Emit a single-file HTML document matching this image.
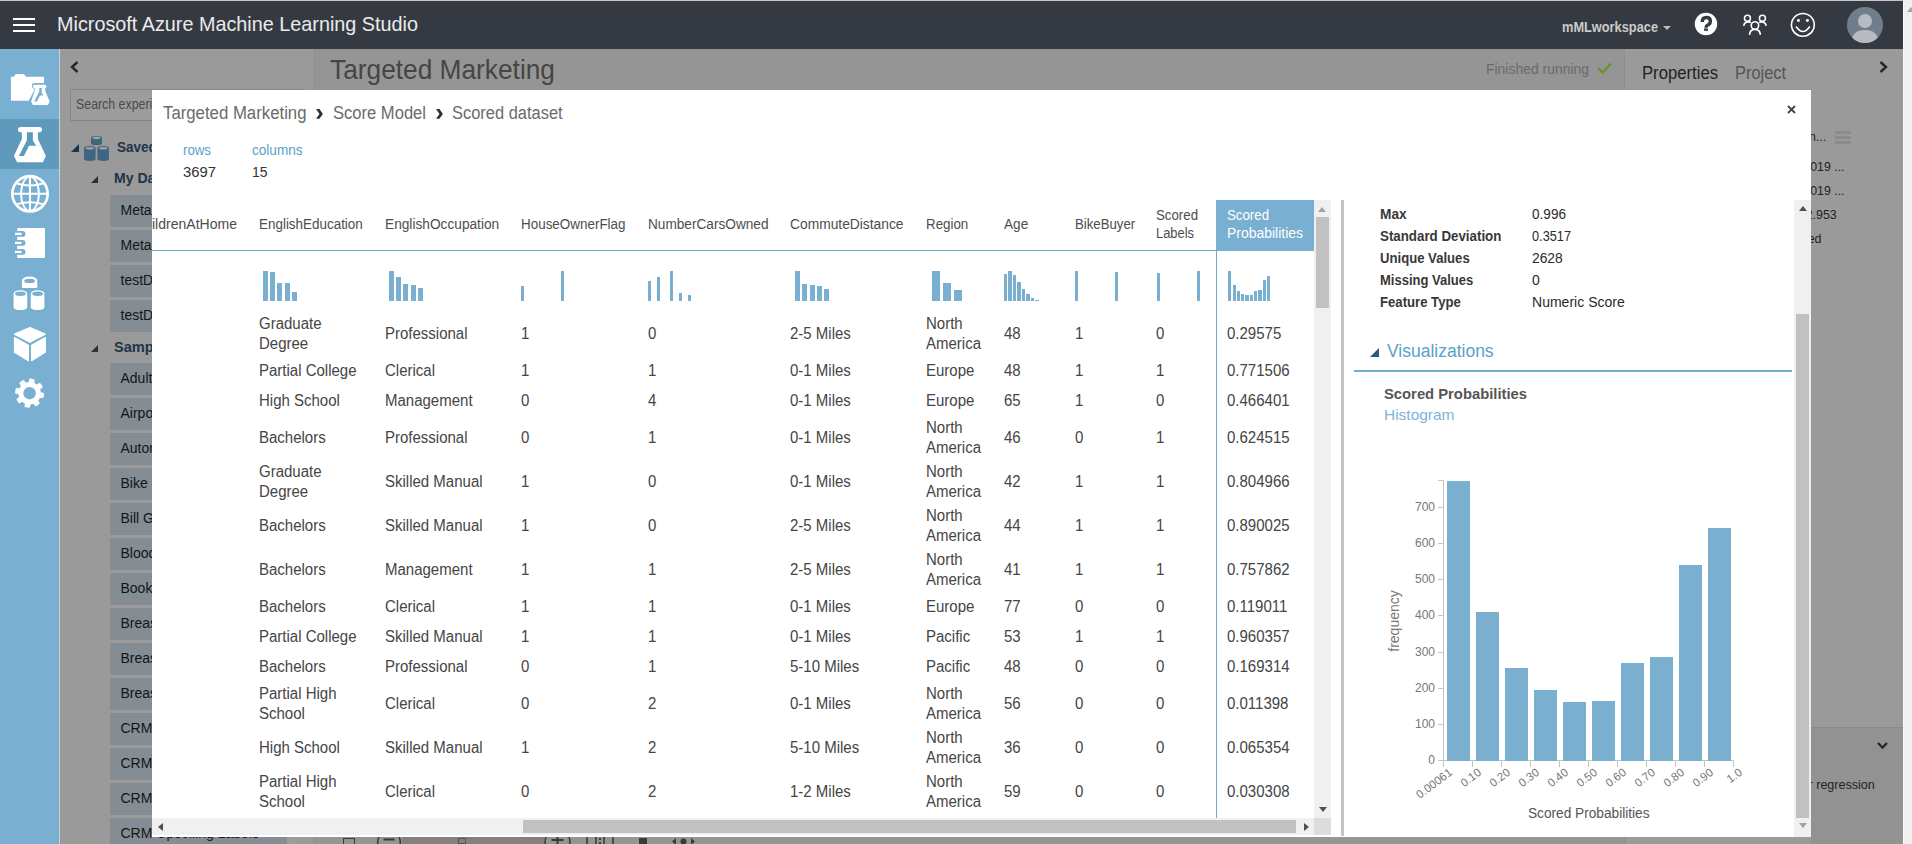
<!DOCTYPE html>
<html><head><meta charset="utf-8">
<style>
*{margin:0;padding:0;box-sizing:border-box}
html,body{width:1912px;height:844px;overflow:hidden;background:#989898;font-family:"Liberation Sans",sans-serif;position:relative}
.a{position:absolute}
.t{position:absolute;white-space:pre}
svg{position:absolute;overflow:visible}
</style></head><body>
<div class="a" style="left:0px;top:0px;width:1912px;height:1px;background:#c8c5c8;"></div>
<div class="a" style="left:0px;top:1px;width:1903px;height:48px;background:#353a42;"></div>
<div class="a" style="left:1903px;top:0px;width:9px;height:844px;background:#f0f0f0;"></div>
<div class="a" style="left:1903px;top:1px;width:1px;height:843px;background:#fafafa;"></div>
<svg style="left:1907px;top:7px" width="6" height="5"><path d="M0 5 H8 L4 0Z" fill="#a3a3a3"/></svg>
<div class="a" style="left:13px;top:18px;width:22px;height:2px;background:#fff;"></div>
<div class="a" style="left:13px;top:24px;width:22px;height:2px;background:#fff;"></div>
<div class="a" style="left:13px;top:30px;width:22px;height:2px;background:#fff;"></div>
<div class="t" style="left:57px;top:12.00px;font-size:21px;line-height:23.46px;color:#ebebeb;font-weight:400;transform:scaleX(0.9429);transform-origin:0 0;">Microsoft Azure Machine Learning Studio</div>
<div class="t" style="left:1562px;top:18.92px;font-size:15px;line-height:16.75px;color:#cacaca;font-weight:700;transform:scaleX(0.8530);transform-origin:0 0;">mMLworkspace</div>
<svg style="left:1663px;top:26px" width="8" height="4"><path d="M0 0H8L4 4Z" fill="#bdbdbd"/></svg>
<svg style="left:1690px;top:8px" width="130" height="34" viewBox="0 0 1912 500">
<circle cx="235" cy="235" r="165" fill="#fff"/>
<path d="M180 205 Q180 140 240 140 Q300 140 300 195 Q300 235 262 250 Q235 262 235 290" fill="none" stroke="#353a42" stroke-width="50"/>
<rect x="207" y="300" width="56" height="36" fill="#353a42"/>
<g fill="none" stroke="#fff" stroke-width="24">
<circle cx="845" cy="152" r="44" stroke-width="22"/><circle cx="1065" cy="152" r="44" stroke-width="22"/><circle cx="955" cy="258" r="55"/>
<path d="M790 262 Q800 205 860 205 Q880 205 895 215"/><path d="M1120 262 Q1110 205 1050 205 Q1030 205 1015 215"/>
<path d="M875 395 Q880 315 955 315 Q1030 315 1035 395"/>
<circle cx="1660" cy="248" r="168"/>
<path d="M1560 272 Q1660 420 1762 272"/>
</g>
<circle cx="1595" cy="185" r="22" fill="#fff"/><circle cx="1727" cy="185" r="22" fill="#fff"/>
</svg>
<svg style="left:1847px;top:7px" width="36" height="36"><defs><clipPath id="av"><circle cx="18" cy="18" r="18"/></clipPath></defs><circle cx="18" cy="18" r="18" fill="#6f7e8a"/><g clip-path="url(#av)" fill="#b8bbbf"><circle cx="18" cy="14" r="7"/><path d="M4 36 Q5 23 18 23 Q31 23 32 36Z"/></g></svg>
<div class="a" style="left:0px;top:49px;width:59px;height:795px;background:#79afd0;"></div>
<div class="a" style="left:59px;top:49px;width:1px;height:795px;background:#cfcfcf;"></div>
<div class="a" style="left:0px;top:119px;width:59px;height:50px;background:#5f9abd;"></div>
<svg style="left:5px;top:65px" width="50" height="50" viewBox="0 0 844 844"><path d="M100 200 H150 L180 152 H322 L355 200 H660 V305 H495 Q452 310 452 352 Q452 392 488 402 V440 L402 605 H100 Z" fill="#fff"/>
<path d="M497 335 H673 A27.5 27.5 0 0 1 673 390 H680 V445 L755 615 L725 675 H470 L440 615 L500 445 V390 H497 A27.5 27.5 0 0 1 497 335 Z" fill="#fff"/>
<path d="M580 390 H620 V475 L655 515 H590 L540 618 H495 L580 445 Z" fill="#79afd0"/></svg>
<svg style="left:5px;top:118px" width="50" height="50" viewBox="0 0 844 844"><path d="M265 150 H580 A45 45 0 0 1 580 240 H555 V355 L690 640 L640 745 H205 L150 640 L285 355 V240 H265 A45 45 0 0 1 265 150 Z" fill="#fff"/>
<path d="M370 240 H470 V375 L525 470 H405 L320 640 H235 L370 375 Z" fill="#5f9abd"/></svg>
<svg style="left:5px;top:168px" width="50" height="50" viewBox="0 0 844 844"><g fill="none" stroke="#fff"><circle cx="422" cy="435" r="298" stroke-width="45"/><ellipse cx="422" cy="435" rx="150" ry="290" stroke-width="32"/>
<path d="M422 140 V730 M130 435 H714" stroke-width="35"/><path d="M205 262 Q422 330 640 262 M205 610 Q422 545 640 610" stroke-width="32"/></g></svg>
<svg style="left:5px;top:218px" width="50" height="50" viewBox="0 0 844 844"><rect x="205" y="168" width="470" height="507" rx="18" fill="#fff"/>
<rect x="140" y="218" width="205" height="100" rx="50" fill="#79afd0"/><rect x="168" y="249" width="112" height="38" fill="#fff"/><rect x="140" y="370" width="205" height="100" rx="50" fill="#79afd0"/><rect x="168" y="401" width="112" height="38" fill="#fff"/><rect x="140" y="522" width="205" height="100" rx="50" fill="#79afd0"/><rect x="168" y="553" width="112" height="38" fill="#fff"/></svg>
<svg style="left:5px;top:268px" width="50" height="50" viewBox="0 0 844 844"><path d="M285 215 A130 70 0 0 1 545 215 V335 A130 1 0 0 1 285 335 Z" fill="#fff"/><ellipse cx="415" cy="220" rx="90" ry="38" fill="#79afd0"/>
<path d="M130 430 A130 70 0 0 1 390 430 V670 A130 55 0 0 1 130 670 Z" fill="#fff" stroke="#79afd0" stroke-width="30"/><ellipse cx="260" cy="435" rx="90" ry="38" fill="#79afd0"/>
<path d="M420 430 A130 70 0 0 1 680 430 V670 A130 55 0 0 1 420 670 Z" fill="#fff" stroke="#79afd0" stroke-width="30"/><ellipse cx="550" cy="435" rx="90" ry="38" fill="#79afd0"/>
<path d="M130 430 A130 70 0 0 1 390 430 V670 A130 55 0 0 1 130 670 Z" fill="none"/></svg>
<svg style="left:5px;top:318px" width="50" height="50" viewBox="0 0 844 844"><g fill="#fff" stroke="#fff" stroke-width="20" stroke-linejoin="round"><path d="M420 160 L680 272 L420 410 L160 272 Z"/><path d="M160 330 L395 462 V720 L160 578 Z"/><path d="M680 330 L448 462 V720 L680 578 Z"/></g></svg>
<svg style="left:5px;top:368px" width="50" height="50" viewBox="0 0 844 844"><g transform="translate(415 425)" fill="#fff"><circle r="190"/><rect x="-48" y="-245" width="96" height="110" rx="22" transform="rotate(10)"/><rect x="-48" y="-245" width="96" height="110" rx="22" transform="rotate(55)"/><rect x="-48" y="-245" width="96" height="110" rx="22" transform="rotate(100)"/><rect x="-48" y="-245" width="96" height="110" rx="22" transform="rotate(145)"/><rect x="-48" y="-245" width="96" height="110" rx="22" transform="rotate(190)"/><rect x="-48" y="-245" width="96" height="110" rx="22" transform="rotate(235)"/><rect x="-48" y="-245" width="96" height="110" rx="22" transform="rotate(280)"/><rect x="-48" y="-245" width="96" height="110" rx="22" transform="rotate(325)"/><circle r="105" fill="#79afd0"/></g></svg>
<div class="a" style="left:60px;top:49px;width:254px;height:795px;background:#9a9a9a;"></div>
<svg style="left:70px;top:61px" width="9" height="12" fill="none" stroke="#1e2a33" stroke-width="2.4"><path d="M7.5 1 L2 6 L7.5 11"/></svg>
<div class="a" style="left:70px;top:89px;width:234px;height:32px;background:#9c9c9c;border:1px solid #858585"></div>
<div class="t" style="left:76px;top:97.33px;font-size:14px;line-height:15.64px;color:#4a4a4a;font-weight:400;transform:scaleX(0.8834);transform-origin:0 0;">Search experiments</div>
<svg style="left:71px;top:144px" width="8" height="8"><path d="M8 0V8H0Z" fill="#1c3447"/></svg>
<svg style="left:84px;top:136px" width="25" height="25" fill="#3f6680"><path d="M7 1.5 Q7 0 12.5 0 Q18 0 18 1.5 V7.5 Q18 9 12.5 9 Q7 9 7 7.5Z"/>
<path d="M0 12 Q0 10 5.8 10 Q11.6 10 11.6 12 V22.5 Q11.6 25 5.8 25 Q0 25 0 22.5Z"/><path d="M13.4 12 Q13.4 10 19.2 10 Q25 10 25 12 V22.5 Q25 25 19.2 25 Q13.4 25 13.4 22.5Z"/>
<ellipse cx="12.5" cy="2" rx="4" ry="1.2" fill="#9f9f9f"/><ellipse cx="5.8" cy="12.3" rx="4.3" ry="1.3" fill="#9f9f9f"/><ellipse cx="19.2" cy="12.3" rx="4.3" ry="1.3" fill="#9f9f9f"/></svg>
<div class="t" style="left:117px;top:139.43px;font-size:15px;line-height:16.75px;color:#1e3548;font-weight:700;transform:scaleX(0.9017);transform-origin:0 0;">Saved Datasets</div>
<svg style="left:91px;top:176px" width="7" height="7"><path d="M7 0V7H0Z" fill="#1c3447"/></svg>
<div class="t" style="left:113.5px;top:170.43px;font-size:15px;line-height:16.75px;color:#1e3548;font-weight:700;transform:scaleX(0.9366);transform-origin:0 0;">My Datasets</div>
<div class="a" style="left:110px;top:195px;width:177px;height:32px;background:#838d93;"></div>
<div class="t" style="left:120.5px;top:203.33px;font-size:14px;line-height:15.64px;color:#151515;font-weight:400;">MetaData</div>
<div class="a" style="left:110px;top:230px;width:177px;height:32px;background:#838d93;"></div>
<div class="t" style="left:120.5px;top:238.33px;font-size:14px;line-height:15.64px;color:#151515;font-weight:400;">MetaData</div>
<div class="a" style="left:110px;top:265px;width:177px;height:32px;background:#838d93;"></div>
<div class="t" style="left:120.5px;top:273.33px;font-size:14px;line-height:15.64px;color:#151515;font-weight:400;">testData</div>
<div class="a" style="left:110px;top:300px;width:177px;height:32px;background:#838d93;"></div>
<div class="t" style="left:120.5px;top:308.33px;font-size:14px;line-height:15.64px;color:#151515;font-weight:400;">testData</div>
<svg style="left:91px;top:345px" width="7" height="7"><path d="M7 0V7H0Z" fill="#1c3447"/></svg>
<div class="t" style="left:113.5px;top:339.43px;font-size:15px;line-height:16.75px;color:#1e3548;font-weight:700;transform:scaleX(0.9724);transform-origin:0 0;">Samples</div>
<div class="a" style="left:110px;top:363px;width:177px;height:32px;background:#838d93;"></div>
<div class="t" style="left:120.5px;top:371.33px;font-size:14px;line-height:15.64px;color:#151515;font-weight:400;">Adult Census</div>
<div class="a" style="left:110px;top:398px;width:177px;height:32px;background:#838d93;"></div>
<div class="t" style="left:120.5px;top:406.33px;font-size:14px;line-height:15.64px;color:#151515;font-weight:400;">Airport Codes</div>
<div class="a" style="left:110px;top:433px;width:177px;height:32px;background:#838d93;"></div>
<div class="t" style="left:120.5px;top:441.33px;font-size:14px;line-height:15.64px;color:#151515;font-weight:400;">Automobile</div>
<div class="a" style="left:110px;top:468px;width:177px;height:32px;background:#838d93;"></div>
<div class="t" style="left:120.5px;top:476.33px;font-size:14px;line-height:15.64px;color:#151515;font-weight:400;">Bike Rental</div>
<div class="a" style="left:110px;top:503px;width:177px;height:32px;background:#838d93;"></div>
<div class="t" style="left:120.5px;top:511.33px;font-size:14px;line-height:15.64px;color:#151515;font-weight:400;">Bill Gates</div>
<div class="a" style="left:110px;top:538px;width:177px;height:32px;background:#838d93;"></div>
<div class="t" style="left:120.5px;top:546.33px;font-size:14px;line-height:15.64px;color:#151515;font-weight:400;">Blood Donation</div>
<div class="a" style="left:110px;top:573px;width:177px;height:32px;background:#838d93;"></div>
<div class="t" style="left:120.5px;top:581.33px;font-size:14px;line-height:15.64px;color:#151515;font-weight:400;">Book Reviews</div>
<div class="a" style="left:110px;top:608px;width:177px;height:32px;background:#838d93;"></div>
<div class="t" style="left:120.5px;top:616.33px;font-size:14px;line-height:15.64px;color:#151515;font-weight:400;">Breast Cancer</div>
<div class="a" style="left:110px;top:643px;width:177px;height:32px;background:#838d93;"></div>
<div class="t" style="left:120.5px;top:651.33px;font-size:14px;line-height:15.64px;color:#151515;font-weight:400;">Breast Cancer</div>
<div class="a" style="left:110px;top:678px;width:177px;height:32px;background:#838d93;"></div>
<div class="t" style="left:120.5px;top:686.33px;font-size:14px;line-height:15.64px;color:#151515;font-weight:400;">Breast Cancer</div>
<div class="a" style="left:110px;top:713px;width:177px;height:32px;background:#838d93;"></div>
<div class="t" style="left:120.5px;top:721.33px;font-size:14px;line-height:15.64px;color:#151515;font-weight:400;">CRM Appetency</div>
<div class="a" style="left:110px;top:748px;width:177px;height:32px;background:#838d93;"></div>
<div class="t" style="left:120.5px;top:756.33px;font-size:14px;line-height:15.64px;color:#151515;font-weight:400;">CRM Churn</div>
<div class="a" style="left:110px;top:783px;width:177px;height:32px;background:#838d93;"></div>
<div class="t" style="left:120.5px;top:791.33px;font-size:14px;line-height:15.64px;color:#151515;font-weight:400;">CRM Dataset</div>
<div class="a" style="left:110px;top:818px;width:177px;height:32px;background:#838d93;"></div>
<div class="t" style="left:120.5px;top:826.33px;font-size:14px;line-height:15.64px;color:#151515;font-weight:400;">CRM Upselling Labels</div>
<div class="a" style="left:314px;top:49px;width:1311px;height:795px;background:#959595;"></div>
<div class="a" style="left:314px;top:49px;width:1px;height:795px;background:#8f8f8f;"></div>
<div class="t" style="left:329.5px;top:53.66px;font-size:28px;line-height:31.28px;color:#454545;font-weight:400;transform:scaleX(0.9387);transform-origin:0 0;">Targeted Marketing</div>
<div class="t" style="left:1486px;top:62.33px;font-size:14px;line-height:15.64px;color:#6a6a6a;font-weight:400;transform:scaleX(0.9950);transform-origin:0 0;">Finished running</div>
<svg style="left:1597px;top:62px" width="15" height="12" fill="none" stroke="#6a9330" stroke-width="2.4"><path d="M1 6 L5.5 10.5 L14 1.5"/></svg>
<div class="a" style="left:287px;top:837px;width:10px;height:7px;background:#9c9c9c;"></div>
<div class="a" style="left:343px;top:838px;width:12px;height:8px;background:transparent;border:1.5px solid #3a3a3a"></div>
<svg style="left:376px;top:837px" width="26" height="8" fill="none" stroke="#3a3a3a" stroke-width="1.6"><path d="M3 0 Q1 4 2 8 M23 0 Q25 4 24 8"/><path d="M7.5 2.5 H18.5" stroke-width="2"/></svg>
<div class="a" style="left:402px;top:837px;width:142px;height:7px;background:#85807e;"></div>
<div class="a" style="left:458px;top:838px;width:8px;height:6px;background:transparent;border:1px solid #555"></div>
<svg style="left:544px;top:837px" width="27" height="8" fill="none" stroke="#3a3a3a" stroke-width="1.6"><path d="M2 0 Q0.5 4 1.5 8 M25 0 Q26.5 4 25.5 8"/><path d="M7.5 3 H19.5 M13.5 0 V8" stroke-width="2"/></svg>
<svg style="left:586px;top:837px" width="28" height="8" fill="none" stroke="#3a3a3a" stroke-width="1.6"><path d="M1 0 V8 M27 0 V8 M10 0 V8 M18 0 V8"/><path d="M14 1 V3 M14 5 V7" stroke-width="2"/></svg>
<div class="a" style="left:639px;top:838px;width:8px;height:6px;background:#3a3a3a;"></div>
<svg style="left:672px;top:837px" width="23" height="8" fill="#3a3a3a"><path d="M4 1 L0 4.5 L4 8Z M19 1 L23 4.5 L19 8Z"/><circle cx="11.5" cy="4.5" r="3"/></svg>
<div class="a" style="left:1625px;top:49px;width:278px;height:795px;background:#9a9a9a;"></div>
<div class="a" style="left:1624px;top:49px;width:1px;height:795px;background:#8f8f8f;"></div>
<div class="t" style="left:1642px;top:62.71px;font-size:18px;line-height:20.11px;color:#222;font-weight:400;transform:scaleX(0.9263);transform-origin:0 0;">Properties</div>
<div class="t" style="left:1735px;top:62.71px;font-size:18px;line-height:20.11px;color:#555;font-weight:400;transform:scaleX(0.9102);transform-origin:0 0;">Project</div>
<svg style="left:1879px;top:61px" width="9" height="12" fill="none" stroke="#1e2a33" stroke-width="2.4"><path d="M1.5 1 L7 6 L1.5 11"/></svg>
<div class="t" style="left:1762.85px;top:129.74px;font-size:13px;line-height:14.52px;color:#222;font-weight:400;transform:scaleX(0.9500);transform-origin:0 0;">Custom n...</div>
<div class="a" style="left:1835px;top:131px;width:16px;height:3px;background:#8c8c8c;"></div>
<div class="a" style="left:1835px;top:136px;width:16px;height:3px;background:#8c8c8c;"></div>
<div class="a" style="left:1835px;top:141px;width:16px;height:3px;background:#8c8c8c;"></div>
<div class="t" style="left:1769.46px;top:160.24px;font-size:13px;line-height:14.52px;color:#222;font-weight:400;transform:scaleX(0.9500);transform-origin:0 0;">10/28/2019 ...</div>
<div class="t" style="left:1769.46px;top:184.24px;font-size:13px;line-height:14.52px;color:#222;font-weight:400;transform:scaleX(0.9500);transform-origin:0 0;">10/28/2019 ...</div>
<div class="t" style="left:1792.35px;top:208.24px;font-size:13px;line-height:14.52px;color:#222;font-weight:400;transform:scaleX(0.9500);transform-origin:0 0;">122.953</div>
<div class="t" style="left:1779.57px;top:232.24px;font-size:13px;line-height:14.52px;color:#222;font-weight:400;transform:scaleX(0.9500);transform-origin:0 0;">Trained</div>
<div class="a" style="left:1811px;top:727px;width:92px;height:117px;background:#929292;"></div>
<div class="a" style="left:1811px;top:727px;width:92px;height:1px;background:#8a8a8a;"></div>
<svg style="left:1877px;top:742px" width="11" height="7" fill="none" stroke="#1e2a33" stroke-width="2.4"><path d="M1 1 L5.5 5.5 L10 1"/></svg>
<div class="t" style="left:1782.16px;top:778.24px;font-size:13px;line-height:14.52px;color:#222;font-weight:400;transform:scaleX(0.9660);transform-origin:0 0;">linear regression</div>
<div class="a" style="left:152px;top:90px;width:1659px;height:747px;background:#fff;"></div>
<div class="t" style="left:163px;top:103.21px;font-size:18px;line-height:20.11px;color:#6b6b6b;font-weight:400;transform:scaleX(0.9313);transform-origin:0 0;">Targeted Marketing</div>
<svg style="left:316px;top:109px" width="8" height="10"><path d="M0 0.1 H3.4 L6.9 5 L3.4 9.8 H0 L3.5 5Z" fill="#2a3038"/></svg>
<div class="t" style="left:333px;top:103.21px;font-size:18px;line-height:20.11px;color:#6b6b6b;font-weight:400;transform:scaleX(0.9202);transform-origin:0 0;">Score Model</div>
<svg style="left:436px;top:109px" width="8" height="10"><path d="M0 0.1 H3.4 L6.9 5 L3.4 9.8 H0 L3.5 5Z" fill="#2a3038"/></svg>
<div class="t" style="left:452.4px;top:103.21px;font-size:18px;line-height:20.11px;color:#6b6b6b;font-weight:400;transform:scaleX(0.9135);transform-origin:0 0;">Scored dataset</div>
<svg style="left:1787px;top:105px" width="9" height="9" fill="none" stroke="#444" stroke-width="1.8"><path d="M1 1L8 8M8 1L1 8"/></svg>
<div class="t" style="left:183px;top:143.33px;font-size:14px;line-height:15.64px;color:#5a9fc9;font-weight:400;transform:scaleX(0.9471);transform-origin:0 0;">rows</div>
<div class="t" style="left:252.4px;top:143.33px;font-size:14px;line-height:15.64px;color:#5a9fc9;font-weight:400;transform:scaleX(0.9705);transform-origin:0 0;">columns</div>
<div class="t" style="left:183px;top:162.97px;font-size:15.5px;line-height:17.31px;color:#333;font-weight:400;transform:scaleX(0.9570);transform-origin:0 0;">3697</div>
<div class="t" style="left:252.4px;top:162.97px;font-size:15.5px;line-height:17.31px;color:#333;font-weight:400;transform:scaleX(0.9043);transform-origin:0 0;">15</div>
<div class="a" style="left:152px;top:250px;width:1064px;height:1px;background:#6faad0;"></div>
<div class="a" style="left:1216px;top:200px;width:98px;height:51px;background:#79afd0;"></div>
<div class="a" style="left:1216px;top:250px;width:1px;height:568px;background:#6faad0;"></div>
<div class="t" style="left:152px;top:217.33px;font-size:14px;line-height:15.64px;color:#4d4d4d;font-weight:400;transform:scaleX(1.0020);transform-origin:0 0;">ildrenAtHome</div>
<div class="t" style="left:258.9px;top:217.33px;font-size:14px;line-height:15.64px;color:#4d4d4d;font-weight:400;transform:scaleX(0.9594);transform-origin:0 0;">EnglishEducation</div>
<div class="t" style="left:384.7px;top:217.33px;font-size:14px;line-height:15.64px;color:#4d4d4d;font-weight:400;transform:scaleX(0.9782);transform-origin:0 0;">EnglishOccupation</div>
<div class="t" style="left:520.9px;top:217.33px;font-size:14px;line-height:15.64px;color:#4d4d4d;font-weight:400;transform:scaleX(0.9593);transform-origin:0 0;">HouseOwnerFlag</div>
<div class="t" style="left:648px;top:217.33px;font-size:14px;line-height:15.64px;color:#4d4d4d;font-weight:400;transform:scaleX(0.9740);transform-origin:0 0;">NumberCarsOwned</div>
<div class="t" style="left:790.2px;top:217.33px;font-size:14px;line-height:15.64px;color:#4d4d4d;font-weight:400;transform:scaleX(0.9856);transform-origin:0 0;">CommuteDistance</div>
<div class="t" style="left:925.7px;top:217.33px;font-size:14px;line-height:15.64px;color:#4d4d4d;font-weight:400;transform:scaleX(0.9532);transform-origin:0 0;">Region</div>
<div class="t" style="left:1003.5px;top:217.33px;font-size:14px;line-height:15.64px;color:#4d4d4d;font-weight:400;transform:scaleX(0.9710);transform-origin:0 0;">Age</div>
<div class="t" style="left:1074.8px;top:217.33px;font-size:14px;line-height:15.64px;color:#4d4d4d;font-weight:400;transform:scaleX(0.9434);transform-origin:0 0;">BikeBuyer</div>
<div class="t" style="left:1156.3px;top:208.33px;font-size:14px;line-height:15.64px;color:#4d4d4d;font-weight:400;transform:scaleX(0.9468);transform-origin:0 0;">Scored</div>
<div class="t" style="left:1156.3px;top:226.33px;font-size:14px;line-height:15.64px;color:#4d4d4d;font-weight:400;transform:scaleX(0.9209);transform-origin:0 0;">Labels</div>
<div class="t" style="left:1227px;top:208.33px;font-size:14px;line-height:15.64px;color:#fff;font-weight:400;transform:scaleX(0.9468);transform-origin:0 0;">Scored</div>
<div class="t" style="left:1227px;top:226.33px;font-size:14px;line-height:15.64px;color:#fff;font-weight:400;transform:scaleX(0.9965);transform-origin:0 0;">Probabilities</div>
<div class="a" style="left:263px;top:271px;width:5px;height:30px;background:#79afd0;"></div>
<div class="a" style="left:270px;top:272px;width:5px;height:29px;background:#79afd0;"></div>
<div class="a" style="left:277px;top:283px;width:5px;height:18px;background:#79afd0;"></div>
<div class="a" style="left:285px;top:283px;width:5px;height:18px;background:#79afd0;"></div>
<div class="a" style="left:292px;top:292px;width:5px;height:9px;background:#79afd0;"></div>
<div class="a" style="left:389px;top:271px;width:5px;height:30px;background:#79afd0;"></div>
<div class="a" style="left:396px;top:276.6px;width:5px;height:24.399999999999977px;background:#79afd0;"></div>
<div class="a" style="left:403px;top:284px;width:5px;height:17px;background:#79afd0;"></div>
<div class="a" style="left:411px;top:285px;width:5px;height:16px;background:#79afd0;"></div>
<div class="a" style="left:418px;top:288px;width:5px;height:13px;background:#79afd0;"></div>
<div class="a" style="left:521px;top:286.4px;width:3px;height:14.600000000000023px;background:#79afd0;"></div>
<div class="a" style="left:561px;top:271px;width:3px;height:30px;background:#79afd0;"></div>
<div class="a" style="left:648px;top:281px;width:3px;height:20px;background:#79afd0;"></div>
<div class="a" style="left:657px;top:277px;width:3px;height:24px;background:#79afd0;"></div>
<div class="a" style="left:670px;top:271px;width:3px;height:30px;background:#79afd0;"></div>
<div class="a" style="left:679px;top:293px;width:3px;height:8px;background:#79afd0;"></div>
<div class="a" style="left:688px;top:295.3px;width:3px;height:5.699999999999989px;background:#79afd0;"></div>
<div class="a" style="left:795px;top:271px;width:5px;height:30px;background:#79afd0;"></div>
<div class="a" style="left:802px;top:284px;width:5px;height:17px;background:#79afd0;"></div>
<div class="a" style="left:809.5px;top:285px;width:5px;height:16px;background:#79afd0;"></div>
<div class="a" style="left:817px;top:286px;width:5px;height:15px;background:#79afd0;"></div>
<div class="a" style="left:824px;top:289.3px;width:5px;height:11.699999999999989px;background:#79afd0;"></div>
<div class="a" style="left:932px;top:271px;width:8px;height:30px;background:#79afd0;"></div>
<div class="a" style="left:943px;top:283px;width:8px;height:18px;background:#79afd0;"></div>
<div class="a" style="left:954px;top:290px;width:8px;height:11px;background:#79afd0;"></div>
<div class="a" style="left:1004.0px;top:274px;width:3.4px;height:27px;background:#79afd0;"></div>
<div class="a" style="left:1008.45px;top:271px;width:3.4px;height:30px;background:#79afd0;"></div>
<div class="a" style="left:1012.9px;top:275.4px;width:3.4px;height:25.600000000000023px;background:#79afd0;"></div>
<div class="a" style="left:1017.35px;top:282.2px;width:3.4px;height:18.80000000000001px;background:#79afd0;"></div>
<div class="a" style="left:1021.8px;top:288.8px;width:3.4px;height:12.199999999999989px;background:#79afd0;"></div>
<div class="a" style="left:1026.25px;top:294px;width:3.4px;height:7px;background:#79afd0;"></div>
<div class="a" style="left:1030.7px;top:298px;width:3.4px;height:3px;background:#79afd0;"></div>
<div class="a" style="left:1035.15px;top:300px;width:3.4px;height:1px;background:#79afd0;"></div>
<div class="a" style="left:1075px;top:271px;width:3px;height:30px;background:#79afd0;"></div>
<div class="a" style="left:1115px;top:272px;width:3px;height:29px;background:#79afd0;"></div>
<div class="a" style="left:1157px;top:272.6px;width:3px;height:28.399999999999977px;background:#79afd0;"></div>
<div class="a" style="left:1197px;top:271px;width:3px;height:30px;background:#79afd0;"></div>
<div class="a" style="left:1228.2px;top:271px;width:3.3px;height:30px;background:#79afd0;"></div>
<div class="a" style="left:1232.5px;top:285px;width:3.3px;height:16px;background:#79afd0;"></div>
<div class="a" style="left:1236.8px;top:291px;width:3.3px;height:10px;background:#79afd0;"></div>
<div class="a" style="left:1241.1000000000001px;top:293.5px;width:3.3px;height:7.5px;background:#79afd0;"></div>
<div class="a" style="left:1245.4px;top:294.7px;width:3.3px;height:6.300000000000011px;background:#79afd0;"></div>
<div class="a" style="left:1249.7px;top:294.6px;width:3.3px;height:6.399999999999977px;background:#79afd0;"></div>
<div class="a" style="left:1254.0px;top:290.5px;width:3.3px;height:10.5px;background:#79afd0;"></div>
<div class="a" style="left:1258.3px;top:289.9px;width:3.3px;height:11.100000000000023px;background:#79afd0;"></div>
<div class="a" style="left:1262.6000000000001px;top:280px;width:3.3px;height:21px;background:#79afd0;"></div>
<div class="a" style="left:1266.9px;top:276px;width:3.3px;height:25px;background:#79afd0;"></div>
<div class="t" style="left:258.9px;top:314.52px;font-size:16px;line-height:17.87px;color:#454545;font-weight:400;transform:scaleX(0.9375);transform-origin:0 0;">Graduate</div>
<div class="t" style="left:258.9px;top:334.52px;font-size:16px;line-height:17.87px;color:#454545;font-weight:400;transform:scaleX(0.9375);transform-origin:0 0;">Degree</div>
<div class="t" style="left:384.7px;top:324.52px;font-size:16px;line-height:17.87px;color:#454545;font-weight:400;transform:scaleX(0.9375);transform-origin:0 0;">Professional</div>
<div class="t" style="left:520.9px;top:324.52px;font-size:16px;line-height:17.87px;color:#454545;font-weight:400;transform:scaleX(0.9375);transform-origin:0 0;">1</div>
<div class="t" style="left:648px;top:324.52px;font-size:16px;line-height:17.87px;color:#454545;font-weight:400;transform:scaleX(0.9375);transform-origin:0 0;">0</div>
<div class="t" style="left:790.2px;top:324.52px;font-size:16px;line-height:17.87px;color:#454545;font-weight:400;transform:scaleX(0.9375);transform-origin:0 0;">2-5 Miles</div>
<div class="t" style="left:925.7px;top:314.52px;font-size:16px;line-height:17.87px;color:#454545;font-weight:400;transform:scaleX(0.9375);transform-origin:0 0;">North</div>
<div class="t" style="left:925.7px;top:334.52px;font-size:16px;line-height:17.87px;color:#454545;font-weight:400;transform:scaleX(0.9375);transform-origin:0 0;">America</div>
<div class="t" style="left:1003.5px;top:324.52px;font-size:16px;line-height:17.87px;color:#454545;font-weight:400;transform:scaleX(0.9375);transform-origin:0 0;">48</div>
<div class="t" style="left:1074.8px;top:324.52px;font-size:16px;line-height:17.87px;color:#454545;font-weight:400;transform:scaleX(0.9375);transform-origin:0 0;">1</div>
<div class="t" style="left:1156.3px;top:324.52px;font-size:16px;line-height:17.87px;color:#454545;font-weight:400;transform:scaleX(0.9375);transform-origin:0 0;">0</div>
<div class="t" style="left:1227px;top:324.52px;font-size:16px;line-height:17.87px;color:#454545;font-weight:400;transform:scaleX(0.9375);transform-origin:0 0;">0.29575</div>
<div class="t" style="left:258.9px;top:361.52px;font-size:16px;line-height:17.87px;color:#454545;font-weight:400;transform:scaleX(0.9375);transform-origin:0 0;">Partial College</div>
<div class="t" style="left:384.7px;top:361.52px;font-size:16px;line-height:17.87px;color:#454545;font-weight:400;transform:scaleX(0.9375);transform-origin:0 0;">Clerical</div>
<div class="t" style="left:520.9px;top:361.52px;font-size:16px;line-height:17.87px;color:#454545;font-weight:400;transform:scaleX(0.9375);transform-origin:0 0;">1</div>
<div class="t" style="left:648px;top:361.52px;font-size:16px;line-height:17.87px;color:#454545;font-weight:400;transform:scaleX(0.9375);transform-origin:0 0;">1</div>
<div class="t" style="left:790.2px;top:361.52px;font-size:16px;line-height:17.87px;color:#454545;font-weight:400;transform:scaleX(0.9375);transform-origin:0 0;">0-1 Miles</div>
<div class="t" style="left:925.7px;top:361.52px;font-size:16px;line-height:17.87px;color:#454545;font-weight:400;transform:scaleX(0.9375);transform-origin:0 0;">Europe</div>
<div class="t" style="left:1003.5px;top:361.52px;font-size:16px;line-height:17.87px;color:#454545;font-weight:400;transform:scaleX(0.9375);transform-origin:0 0;">48</div>
<div class="t" style="left:1074.8px;top:361.52px;font-size:16px;line-height:17.87px;color:#454545;font-weight:400;transform:scaleX(0.9375);transform-origin:0 0;">1</div>
<div class="t" style="left:1156.3px;top:361.52px;font-size:16px;line-height:17.87px;color:#454545;font-weight:400;transform:scaleX(0.9375);transform-origin:0 0;">1</div>
<div class="t" style="left:1227px;top:361.52px;font-size:16px;line-height:17.87px;color:#454545;font-weight:400;transform:scaleX(0.9375);transform-origin:0 0;">0.771506</div>
<div class="t" style="left:258.9px;top:391.52px;font-size:16px;line-height:17.87px;color:#454545;font-weight:400;transform:scaleX(0.9375);transform-origin:0 0;">High School</div>
<div class="t" style="left:384.7px;top:391.52px;font-size:16px;line-height:17.87px;color:#454545;font-weight:400;transform:scaleX(0.9375);transform-origin:0 0;">Management</div>
<div class="t" style="left:520.9px;top:391.52px;font-size:16px;line-height:17.87px;color:#454545;font-weight:400;transform:scaleX(0.9375);transform-origin:0 0;">0</div>
<div class="t" style="left:648px;top:391.52px;font-size:16px;line-height:17.87px;color:#454545;font-weight:400;transform:scaleX(0.9375);transform-origin:0 0;">4</div>
<div class="t" style="left:790.2px;top:391.52px;font-size:16px;line-height:17.87px;color:#454545;font-weight:400;transform:scaleX(0.9375);transform-origin:0 0;">0-1 Miles</div>
<div class="t" style="left:925.7px;top:391.52px;font-size:16px;line-height:17.87px;color:#454545;font-weight:400;transform:scaleX(0.9375);transform-origin:0 0;">Europe</div>
<div class="t" style="left:1003.5px;top:391.52px;font-size:16px;line-height:17.87px;color:#454545;font-weight:400;transform:scaleX(0.9375);transform-origin:0 0;">65</div>
<div class="t" style="left:1074.8px;top:391.52px;font-size:16px;line-height:17.87px;color:#454545;font-weight:400;transform:scaleX(0.9375);transform-origin:0 0;">1</div>
<div class="t" style="left:1156.3px;top:391.52px;font-size:16px;line-height:17.87px;color:#454545;font-weight:400;transform:scaleX(0.9375);transform-origin:0 0;">0</div>
<div class="t" style="left:1227px;top:391.52px;font-size:16px;line-height:17.87px;color:#454545;font-weight:400;transform:scaleX(0.9375);transform-origin:0 0;">0.466401</div>
<div class="t" style="left:258.9px;top:428.52px;font-size:16px;line-height:17.87px;color:#454545;font-weight:400;transform:scaleX(0.9375);transform-origin:0 0;">Bachelors</div>
<div class="t" style="left:384.7px;top:428.52px;font-size:16px;line-height:17.87px;color:#454545;font-weight:400;transform:scaleX(0.9375);transform-origin:0 0;">Professional</div>
<div class="t" style="left:520.9px;top:428.52px;font-size:16px;line-height:17.87px;color:#454545;font-weight:400;transform:scaleX(0.9375);transform-origin:0 0;">0</div>
<div class="t" style="left:648px;top:428.52px;font-size:16px;line-height:17.87px;color:#454545;font-weight:400;transform:scaleX(0.9375);transform-origin:0 0;">1</div>
<div class="t" style="left:790.2px;top:428.52px;font-size:16px;line-height:17.87px;color:#454545;font-weight:400;transform:scaleX(0.9375);transform-origin:0 0;">0-1 Miles</div>
<div class="t" style="left:925.7px;top:418.52px;font-size:16px;line-height:17.87px;color:#454545;font-weight:400;transform:scaleX(0.9375);transform-origin:0 0;">North</div>
<div class="t" style="left:925.7px;top:438.52px;font-size:16px;line-height:17.87px;color:#454545;font-weight:400;transform:scaleX(0.9375);transform-origin:0 0;">America</div>
<div class="t" style="left:1003.5px;top:428.52px;font-size:16px;line-height:17.87px;color:#454545;font-weight:400;transform:scaleX(0.9375);transform-origin:0 0;">46</div>
<div class="t" style="left:1074.8px;top:428.52px;font-size:16px;line-height:17.87px;color:#454545;font-weight:400;transform:scaleX(0.9375);transform-origin:0 0;">0</div>
<div class="t" style="left:1156.3px;top:428.52px;font-size:16px;line-height:17.87px;color:#454545;font-weight:400;transform:scaleX(0.9375);transform-origin:0 0;">1</div>
<div class="t" style="left:1227px;top:428.52px;font-size:16px;line-height:17.87px;color:#454545;font-weight:400;transform:scaleX(0.9375);transform-origin:0 0;">0.624515</div>
<div class="t" style="left:258.9px;top:462.52px;font-size:16px;line-height:17.87px;color:#454545;font-weight:400;transform:scaleX(0.9375);transform-origin:0 0;">Graduate</div>
<div class="t" style="left:258.9px;top:482.52px;font-size:16px;line-height:17.87px;color:#454545;font-weight:400;transform:scaleX(0.9375);transform-origin:0 0;">Degree</div>
<div class="t" style="left:384.7px;top:472.52px;font-size:16px;line-height:17.87px;color:#454545;font-weight:400;transform:scaleX(0.9375);transform-origin:0 0;">Skilled Manual</div>
<div class="t" style="left:520.9px;top:472.52px;font-size:16px;line-height:17.87px;color:#454545;font-weight:400;transform:scaleX(0.9375);transform-origin:0 0;">1</div>
<div class="t" style="left:648px;top:472.52px;font-size:16px;line-height:17.87px;color:#454545;font-weight:400;transform:scaleX(0.9375);transform-origin:0 0;">0</div>
<div class="t" style="left:790.2px;top:472.52px;font-size:16px;line-height:17.87px;color:#454545;font-weight:400;transform:scaleX(0.9375);transform-origin:0 0;">0-1 Miles</div>
<div class="t" style="left:925.7px;top:462.52px;font-size:16px;line-height:17.87px;color:#454545;font-weight:400;transform:scaleX(0.9375);transform-origin:0 0;">North</div>
<div class="t" style="left:925.7px;top:482.52px;font-size:16px;line-height:17.87px;color:#454545;font-weight:400;transform:scaleX(0.9375);transform-origin:0 0;">America</div>
<div class="t" style="left:1003.5px;top:472.52px;font-size:16px;line-height:17.87px;color:#454545;font-weight:400;transform:scaleX(0.9375);transform-origin:0 0;">42</div>
<div class="t" style="left:1074.8px;top:472.52px;font-size:16px;line-height:17.87px;color:#454545;font-weight:400;transform:scaleX(0.9375);transform-origin:0 0;">1</div>
<div class="t" style="left:1156.3px;top:472.52px;font-size:16px;line-height:17.87px;color:#454545;font-weight:400;transform:scaleX(0.9375);transform-origin:0 0;">1</div>
<div class="t" style="left:1227px;top:472.52px;font-size:16px;line-height:17.87px;color:#454545;font-weight:400;transform:scaleX(0.9375);transform-origin:0 0;">0.804966</div>
<div class="t" style="left:258.9px;top:516.52px;font-size:16px;line-height:17.87px;color:#454545;font-weight:400;transform:scaleX(0.9375);transform-origin:0 0;">Bachelors</div>
<div class="t" style="left:384.7px;top:516.52px;font-size:16px;line-height:17.87px;color:#454545;font-weight:400;transform:scaleX(0.9375);transform-origin:0 0;">Skilled Manual</div>
<div class="t" style="left:520.9px;top:516.52px;font-size:16px;line-height:17.87px;color:#454545;font-weight:400;transform:scaleX(0.9375);transform-origin:0 0;">1</div>
<div class="t" style="left:648px;top:516.52px;font-size:16px;line-height:17.87px;color:#454545;font-weight:400;transform:scaleX(0.9375);transform-origin:0 0;">0</div>
<div class="t" style="left:790.2px;top:516.52px;font-size:16px;line-height:17.87px;color:#454545;font-weight:400;transform:scaleX(0.9375);transform-origin:0 0;">2-5 Miles</div>
<div class="t" style="left:925.7px;top:506.52px;font-size:16px;line-height:17.87px;color:#454545;font-weight:400;transform:scaleX(0.9375);transform-origin:0 0;">North</div>
<div class="t" style="left:925.7px;top:526.52px;font-size:16px;line-height:17.87px;color:#454545;font-weight:400;transform:scaleX(0.9375);transform-origin:0 0;">America</div>
<div class="t" style="left:1003.5px;top:516.52px;font-size:16px;line-height:17.87px;color:#454545;font-weight:400;transform:scaleX(0.9375);transform-origin:0 0;">44</div>
<div class="t" style="left:1074.8px;top:516.52px;font-size:16px;line-height:17.87px;color:#454545;font-weight:400;transform:scaleX(0.9375);transform-origin:0 0;">1</div>
<div class="t" style="left:1156.3px;top:516.52px;font-size:16px;line-height:17.87px;color:#454545;font-weight:400;transform:scaleX(0.9375);transform-origin:0 0;">1</div>
<div class="t" style="left:1227px;top:516.52px;font-size:16px;line-height:17.87px;color:#454545;font-weight:400;transform:scaleX(0.9375);transform-origin:0 0;">0.890025</div>
<div class="t" style="left:258.9px;top:560.52px;font-size:16px;line-height:17.87px;color:#454545;font-weight:400;transform:scaleX(0.9375);transform-origin:0 0;">Bachelors</div>
<div class="t" style="left:384.7px;top:560.52px;font-size:16px;line-height:17.87px;color:#454545;font-weight:400;transform:scaleX(0.9375);transform-origin:0 0;">Management</div>
<div class="t" style="left:520.9px;top:560.52px;font-size:16px;line-height:17.87px;color:#454545;font-weight:400;transform:scaleX(0.9375);transform-origin:0 0;">1</div>
<div class="t" style="left:648px;top:560.52px;font-size:16px;line-height:17.87px;color:#454545;font-weight:400;transform:scaleX(0.9375);transform-origin:0 0;">1</div>
<div class="t" style="left:790.2px;top:560.52px;font-size:16px;line-height:17.87px;color:#454545;font-weight:400;transform:scaleX(0.9375);transform-origin:0 0;">2-5 Miles</div>
<div class="t" style="left:925.7px;top:550.52px;font-size:16px;line-height:17.87px;color:#454545;font-weight:400;transform:scaleX(0.9375);transform-origin:0 0;">North</div>
<div class="t" style="left:925.7px;top:570.52px;font-size:16px;line-height:17.87px;color:#454545;font-weight:400;transform:scaleX(0.9375);transform-origin:0 0;">America</div>
<div class="t" style="left:1003.5px;top:560.52px;font-size:16px;line-height:17.87px;color:#454545;font-weight:400;transform:scaleX(0.9375);transform-origin:0 0;">41</div>
<div class="t" style="left:1074.8px;top:560.52px;font-size:16px;line-height:17.87px;color:#454545;font-weight:400;transform:scaleX(0.9375);transform-origin:0 0;">1</div>
<div class="t" style="left:1156.3px;top:560.52px;font-size:16px;line-height:17.87px;color:#454545;font-weight:400;transform:scaleX(0.9375);transform-origin:0 0;">1</div>
<div class="t" style="left:1227px;top:560.52px;font-size:16px;line-height:17.87px;color:#454545;font-weight:400;transform:scaleX(0.9375);transform-origin:0 0;">0.757862</div>
<div class="t" style="left:258.9px;top:597.52px;font-size:16px;line-height:17.87px;color:#454545;font-weight:400;transform:scaleX(0.9375);transform-origin:0 0;">Bachelors</div>
<div class="t" style="left:384.7px;top:597.52px;font-size:16px;line-height:17.87px;color:#454545;font-weight:400;transform:scaleX(0.9375);transform-origin:0 0;">Clerical</div>
<div class="t" style="left:520.9px;top:597.52px;font-size:16px;line-height:17.87px;color:#454545;font-weight:400;transform:scaleX(0.9375);transform-origin:0 0;">1</div>
<div class="t" style="left:648px;top:597.52px;font-size:16px;line-height:17.87px;color:#454545;font-weight:400;transform:scaleX(0.9375);transform-origin:0 0;">1</div>
<div class="t" style="left:790.2px;top:597.52px;font-size:16px;line-height:17.87px;color:#454545;font-weight:400;transform:scaleX(0.9375);transform-origin:0 0;">0-1 Miles</div>
<div class="t" style="left:925.7px;top:597.52px;font-size:16px;line-height:17.87px;color:#454545;font-weight:400;transform:scaleX(0.9375);transform-origin:0 0;">Europe</div>
<div class="t" style="left:1003.5px;top:597.52px;font-size:16px;line-height:17.87px;color:#454545;font-weight:400;transform:scaleX(0.9375);transform-origin:0 0;">77</div>
<div class="t" style="left:1074.8px;top:597.52px;font-size:16px;line-height:17.87px;color:#454545;font-weight:400;transform:scaleX(0.9375);transform-origin:0 0;">0</div>
<div class="t" style="left:1156.3px;top:597.52px;font-size:16px;line-height:17.87px;color:#454545;font-weight:400;transform:scaleX(0.9375);transform-origin:0 0;">0</div>
<div class="t" style="left:1227px;top:597.52px;font-size:16px;line-height:17.87px;color:#454545;font-weight:400;transform:scaleX(0.9375);transform-origin:0 0;">0.119011</div>
<div class="t" style="left:258.9px;top:627.52px;font-size:16px;line-height:17.87px;color:#454545;font-weight:400;transform:scaleX(0.9375);transform-origin:0 0;">Partial College</div>
<div class="t" style="left:384.7px;top:627.52px;font-size:16px;line-height:17.87px;color:#454545;font-weight:400;transform:scaleX(0.9375);transform-origin:0 0;">Skilled Manual</div>
<div class="t" style="left:520.9px;top:627.52px;font-size:16px;line-height:17.87px;color:#454545;font-weight:400;transform:scaleX(0.9375);transform-origin:0 0;">1</div>
<div class="t" style="left:648px;top:627.52px;font-size:16px;line-height:17.87px;color:#454545;font-weight:400;transform:scaleX(0.9375);transform-origin:0 0;">1</div>
<div class="t" style="left:790.2px;top:627.52px;font-size:16px;line-height:17.87px;color:#454545;font-weight:400;transform:scaleX(0.9375);transform-origin:0 0;">0-1 Miles</div>
<div class="t" style="left:925.7px;top:627.52px;font-size:16px;line-height:17.87px;color:#454545;font-weight:400;transform:scaleX(0.9375);transform-origin:0 0;">Pacific</div>
<div class="t" style="left:1003.5px;top:627.52px;font-size:16px;line-height:17.87px;color:#454545;font-weight:400;transform:scaleX(0.9375);transform-origin:0 0;">53</div>
<div class="t" style="left:1074.8px;top:627.52px;font-size:16px;line-height:17.87px;color:#454545;font-weight:400;transform:scaleX(0.9375);transform-origin:0 0;">1</div>
<div class="t" style="left:1156.3px;top:627.52px;font-size:16px;line-height:17.87px;color:#454545;font-weight:400;transform:scaleX(0.9375);transform-origin:0 0;">1</div>
<div class="t" style="left:1227px;top:627.52px;font-size:16px;line-height:17.87px;color:#454545;font-weight:400;transform:scaleX(0.9375);transform-origin:0 0;">0.960357</div>
<div class="t" style="left:258.9px;top:657.52px;font-size:16px;line-height:17.87px;color:#454545;font-weight:400;transform:scaleX(0.9375);transform-origin:0 0;">Bachelors</div>
<div class="t" style="left:384.7px;top:657.52px;font-size:16px;line-height:17.87px;color:#454545;font-weight:400;transform:scaleX(0.9375);transform-origin:0 0;">Professional</div>
<div class="t" style="left:520.9px;top:657.52px;font-size:16px;line-height:17.87px;color:#454545;font-weight:400;transform:scaleX(0.9375);transform-origin:0 0;">0</div>
<div class="t" style="left:648px;top:657.52px;font-size:16px;line-height:17.87px;color:#454545;font-weight:400;transform:scaleX(0.9375);transform-origin:0 0;">1</div>
<div class="t" style="left:790.2px;top:657.52px;font-size:16px;line-height:17.87px;color:#454545;font-weight:400;transform:scaleX(0.9375);transform-origin:0 0;">5-10 Miles</div>
<div class="t" style="left:925.7px;top:657.52px;font-size:16px;line-height:17.87px;color:#454545;font-weight:400;transform:scaleX(0.9375);transform-origin:0 0;">Pacific</div>
<div class="t" style="left:1003.5px;top:657.52px;font-size:16px;line-height:17.87px;color:#454545;font-weight:400;transform:scaleX(0.9375);transform-origin:0 0;">48</div>
<div class="t" style="left:1074.8px;top:657.52px;font-size:16px;line-height:17.87px;color:#454545;font-weight:400;transform:scaleX(0.9375);transform-origin:0 0;">0</div>
<div class="t" style="left:1156.3px;top:657.52px;font-size:16px;line-height:17.87px;color:#454545;font-weight:400;transform:scaleX(0.9375);transform-origin:0 0;">0</div>
<div class="t" style="left:1227px;top:657.52px;font-size:16px;line-height:17.87px;color:#454545;font-weight:400;transform:scaleX(0.9375);transform-origin:0 0;">0.169314</div>
<div class="t" style="left:258.9px;top:684.52px;font-size:16px;line-height:17.87px;color:#454545;font-weight:400;transform:scaleX(0.9375);transform-origin:0 0;">Partial High</div>
<div class="t" style="left:258.9px;top:704.52px;font-size:16px;line-height:17.87px;color:#454545;font-weight:400;transform:scaleX(0.9375);transform-origin:0 0;">School</div>
<div class="t" style="left:384.7px;top:694.52px;font-size:16px;line-height:17.87px;color:#454545;font-weight:400;transform:scaleX(0.9375);transform-origin:0 0;">Clerical</div>
<div class="t" style="left:520.9px;top:694.52px;font-size:16px;line-height:17.87px;color:#454545;font-weight:400;transform:scaleX(0.9375);transform-origin:0 0;">0</div>
<div class="t" style="left:648px;top:694.52px;font-size:16px;line-height:17.87px;color:#454545;font-weight:400;transform:scaleX(0.9375);transform-origin:0 0;">2</div>
<div class="t" style="left:790.2px;top:694.52px;font-size:16px;line-height:17.87px;color:#454545;font-weight:400;transform:scaleX(0.9375);transform-origin:0 0;">0-1 Miles</div>
<div class="t" style="left:925.7px;top:684.52px;font-size:16px;line-height:17.87px;color:#454545;font-weight:400;transform:scaleX(0.9375);transform-origin:0 0;">North</div>
<div class="t" style="left:925.7px;top:704.52px;font-size:16px;line-height:17.87px;color:#454545;font-weight:400;transform:scaleX(0.9375);transform-origin:0 0;">America</div>
<div class="t" style="left:1003.5px;top:694.52px;font-size:16px;line-height:17.87px;color:#454545;font-weight:400;transform:scaleX(0.9375);transform-origin:0 0;">56</div>
<div class="t" style="left:1074.8px;top:694.52px;font-size:16px;line-height:17.87px;color:#454545;font-weight:400;transform:scaleX(0.9375);transform-origin:0 0;">0</div>
<div class="t" style="left:1156.3px;top:694.52px;font-size:16px;line-height:17.87px;color:#454545;font-weight:400;transform:scaleX(0.9375);transform-origin:0 0;">0</div>
<div class="t" style="left:1227px;top:694.52px;font-size:16px;line-height:17.87px;color:#454545;font-weight:400;transform:scaleX(0.9375);transform-origin:0 0;">0.011398</div>
<div class="t" style="left:258.9px;top:738.52px;font-size:16px;line-height:17.87px;color:#454545;font-weight:400;transform:scaleX(0.9375);transform-origin:0 0;">High School</div>
<div class="t" style="left:384.7px;top:738.52px;font-size:16px;line-height:17.87px;color:#454545;font-weight:400;transform:scaleX(0.9375);transform-origin:0 0;">Skilled Manual</div>
<div class="t" style="left:520.9px;top:738.52px;font-size:16px;line-height:17.87px;color:#454545;font-weight:400;transform:scaleX(0.9375);transform-origin:0 0;">1</div>
<div class="t" style="left:648px;top:738.52px;font-size:16px;line-height:17.87px;color:#454545;font-weight:400;transform:scaleX(0.9375);transform-origin:0 0;">2</div>
<div class="t" style="left:790.2px;top:738.52px;font-size:16px;line-height:17.87px;color:#454545;font-weight:400;transform:scaleX(0.9375);transform-origin:0 0;">5-10 Miles</div>
<div class="t" style="left:925.7px;top:728.52px;font-size:16px;line-height:17.87px;color:#454545;font-weight:400;transform:scaleX(0.9375);transform-origin:0 0;">North</div>
<div class="t" style="left:925.7px;top:748.52px;font-size:16px;line-height:17.87px;color:#454545;font-weight:400;transform:scaleX(0.9375);transform-origin:0 0;">America</div>
<div class="t" style="left:1003.5px;top:738.52px;font-size:16px;line-height:17.87px;color:#454545;font-weight:400;transform:scaleX(0.9375);transform-origin:0 0;">36</div>
<div class="t" style="left:1074.8px;top:738.52px;font-size:16px;line-height:17.87px;color:#454545;font-weight:400;transform:scaleX(0.9375);transform-origin:0 0;">0</div>
<div class="t" style="left:1156.3px;top:738.52px;font-size:16px;line-height:17.87px;color:#454545;font-weight:400;transform:scaleX(0.9375);transform-origin:0 0;">0</div>
<div class="t" style="left:1227px;top:738.52px;font-size:16px;line-height:17.87px;color:#454545;font-weight:400;transform:scaleX(0.9375);transform-origin:0 0;">0.065354</div>
<div class="t" style="left:258.9px;top:772.52px;font-size:16px;line-height:17.87px;color:#454545;font-weight:400;transform:scaleX(0.9375);transform-origin:0 0;">Partial High</div>
<div class="t" style="left:258.9px;top:792.52px;font-size:16px;line-height:17.87px;color:#454545;font-weight:400;transform:scaleX(0.9375);transform-origin:0 0;">School</div>
<div class="t" style="left:384.7px;top:782.52px;font-size:16px;line-height:17.87px;color:#454545;font-weight:400;transform:scaleX(0.9375);transform-origin:0 0;">Clerical</div>
<div class="t" style="left:520.9px;top:782.52px;font-size:16px;line-height:17.87px;color:#454545;font-weight:400;transform:scaleX(0.9375);transform-origin:0 0;">0</div>
<div class="t" style="left:648px;top:782.52px;font-size:16px;line-height:17.87px;color:#454545;font-weight:400;transform:scaleX(0.9375);transform-origin:0 0;">2</div>
<div class="t" style="left:790.2px;top:782.52px;font-size:16px;line-height:17.87px;color:#454545;font-weight:400;transform:scaleX(0.9375);transform-origin:0 0;">1-2 Miles</div>
<div class="t" style="left:925.7px;top:772.52px;font-size:16px;line-height:17.87px;color:#454545;font-weight:400;transform:scaleX(0.9375);transform-origin:0 0;">North</div>
<div class="t" style="left:925.7px;top:792.52px;font-size:16px;line-height:17.87px;color:#454545;font-weight:400;transform:scaleX(0.9375);transform-origin:0 0;">America</div>
<div class="t" style="left:1003.5px;top:782.52px;font-size:16px;line-height:17.87px;color:#454545;font-weight:400;transform:scaleX(0.9375);transform-origin:0 0;">59</div>
<div class="t" style="left:1074.8px;top:782.52px;font-size:16px;line-height:17.87px;color:#454545;font-weight:400;transform:scaleX(0.9375);transform-origin:0 0;">0</div>
<div class="t" style="left:1156.3px;top:782.52px;font-size:16px;line-height:17.87px;color:#454545;font-weight:400;transform:scaleX(0.9375);transform-origin:0 0;">0</div>
<div class="t" style="left:1227px;top:782.52px;font-size:16px;line-height:17.87px;color:#454545;font-weight:400;transform:scaleX(0.9375);transform-origin:0 0;">0.030308</div>
<div class="a" style="left:1314px;top:200px;width:17px;height:618px;background:#f0f0f0;"></div>
<div class="a" style="left:1316px;top:217px;width:13px;height:91px;background:#c1c1c1;"></div>
<svg style="left:1318px;top:207px" width="8" height="5"><path d="M0 5H8L4 0Z" fill="#a3a3a3"/></svg>
<svg style="left:1318.5px;top:807px" width="8" height="5"><path d="M0 0H8L4 5Z" fill="#505050"/></svg>
<div class="a" style="left:152px;top:818px;width:1162px;height:17px;background:#f0f0f0;"></div>
<div class="a" style="left:523px;top:820px;width:773px;height:13px;background:#c1c1c1;"></div>
<svg style="left:157.5px;top:822.5px" width="5" height="8"><path d="M5 0V8L0 4Z" fill="#505050"/></svg>
<svg style="left:1304px;top:822.5px" width="5" height="8"><path d="M0 0V8L5 4Z" fill="#505050"/></svg>
<div class="a" style="left:1314px;top:818px;width:17px;height:17px;background:#dcdcdc;"></div>
<div class="a" style="left:1341px;top:200px;width:3px;height:636px;background:#c3c3c3;"></div>
<div class="t" style="left:1380px;top:207.33px;font-size:14px;line-height:15.64px;color:#383838;font-weight:700;transform:scaleX(0.9767);transform-origin:0 0;">Max</div>
<div class="t" style="left:1532px;top:207.33px;font-size:14px;line-height:15.64px;color:#2a2a2a;font-weight:400;transform:scaleX(0.9701);transform-origin:0 0;">0.996</div>
<div class="t" style="left:1380px;top:229.33px;font-size:14px;line-height:15.64px;color:#383838;font-weight:700;transform:scaleX(0.9515);transform-origin:0 0;">Standard Deviation</div>
<div class="t" style="left:1532px;top:229.33px;font-size:14px;line-height:15.64px;color:#2a2a2a;font-weight:400;transform:scaleX(0.9106);transform-origin:0 0;">0.3517</div>
<div class="t" style="left:1380px;top:251.33px;font-size:14px;line-height:15.64px;color:#383838;font-weight:700;transform:scaleX(0.9373);transform-origin:0 0;">Unique Values</div>
<div class="t" style="left:1532px;top:251.33px;font-size:14px;line-height:15.64px;color:#2a2a2a;font-weight:400;transform:scaleX(0.9854);transform-origin:0 0;">2628</div>
<div class="t" style="left:1380px;top:273.33px;font-size:14px;line-height:15.64px;color:#383838;font-weight:700;transform:scaleX(0.9285);transform-origin:0 0;">Missing Values</div>
<div class="t" style="left:1532px;top:273.33px;font-size:14px;line-height:15.64px;color:#2a2a2a;font-weight:400;">0</div>
<div class="t" style="left:1380px;top:295.33px;font-size:14px;line-height:15.64px;color:#383838;font-weight:700;transform:scaleX(0.9383);transform-origin:0 0;">Feature Type</div>
<div class="t" style="left:1532px;top:295.33px;font-size:14px;line-height:15.64px;color:#2a2a2a;font-weight:400;transform:scaleX(1.0022);transform-origin:0 0;">Numeric Score</div>
<svg style="left:1370px;top:348px" width="9" height="9"><path d="M9 0V9H0Z" fill="#2c5a78"/></svg>
<div class="t" style="left:1387.4px;top:340.71px;font-size:18px;line-height:20.11px;color:#5a9fc9;font-weight:400;transform:scaleX(0.9714);transform-origin:0 0;">Visualizations</div>
<div class="a" style="left:1354px;top:370px;width:438px;height:2px;background:#6faad0;"></div>
<div class="t" style="left:1384.4px;top:385.93px;font-size:15px;line-height:16.75px;color:#555;font-weight:700;transform:scaleX(0.9859);transform-origin:0 0;">Scored Probabilities</div>
<div class="t" style="left:1384.4px;top:407.43px;font-size:15px;line-height:16.75px;color:#7fb3d5;font-weight:400;transform:scaleX(1.0313);transform-origin:0 0;">Histogram</div>
<div class="a" style="left:1794px;top:200px;width:17px;height:637px;background:#f0f0f0;"></div>
<div class="a" style="left:1796px;top:314px;width:13px;height:504px;background:#c1c1c1;"></div>
<svg style="left:1798.5px;top:206px" width="8" height="5"><path d="M0 5H8L4 0Z" fill="#505050"/></svg>
<svg style="left:1798.5px;top:823px" width="8" height="5"><path d="M0 0H8L4 5Z" fill="#a3a3a3"/></svg>
<div class="a" style="left:1443px;top:480px;width:1px;height:281px;background:#c4c4c4;"></div>
<div class="a" style="left:1438px;top:480px;width:5px;height:1px;background:#c4c4c4;"></div>
<div class="a" style="left:1438px;top:760px;width:5px;height:1px;background:#c4c4c4;"></div>
<div class="t" style="left:1428.31px;top:753.64px;font-size:12px;line-height:13.40px;color:#777;font-weight:400;">0</div>
<div class="a" style="left:1438px;top:724px;width:5px;height:1px;background:#c4c4c4;"></div>
<div class="t" style="left:1414.97px;top:717.64px;font-size:12px;line-height:13.40px;color:#777;font-weight:400;">100</div>
<div class="a" style="left:1438px;top:688px;width:5px;height:1px;background:#c4c4c4;"></div>
<div class="t" style="left:1414.97px;top:681.64px;font-size:12px;line-height:13.40px;color:#777;font-weight:400;">200</div>
<div class="a" style="left:1438px;top:652px;width:5px;height:1px;background:#c4c4c4;"></div>
<div class="t" style="left:1414.97px;top:645.64px;font-size:12px;line-height:13.40px;color:#777;font-weight:400;">300</div>
<div class="a" style="left:1438px;top:615px;width:5px;height:1px;background:#c4c4c4;"></div>
<div class="t" style="left:1414.97px;top:608.64px;font-size:12px;line-height:13.40px;color:#777;font-weight:400;">400</div>
<div class="a" style="left:1438px;top:579px;width:5px;height:1px;background:#c4c4c4;"></div>
<div class="t" style="left:1414.97px;top:572.64px;font-size:12px;line-height:13.40px;color:#777;font-weight:400;">500</div>
<div class="a" style="left:1438px;top:543px;width:5px;height:1px;background:#c4c4c4;"></div>
<div class="t" style="left:1414.97px;top:536.64px;font-size:12px;line-height:13.40px;color:#777;font-weight:400;">600</div>
<div class="a" style="left:1438px;top:507px;width:5px;height:1px;background:#c4c4c4;"></div>
<div class="t" style="left:1414.97px;top:500.64px;font-size:12px;line-height:13.40px;color:#777;font-weight:400;">700</div>
<div class="a" style="left:1443px;top:760px;width:291px;height:1px;background:#c4c4c4;"></div>
<div class="a" style="left:1443px;top:760px;width:1px;height:7px;background:#c4c4c4;"></div>
<div class="a" style="left:1472px;top:760px;width:1px;height:7px;background:#c4c4c4;"></div>
<div class="a" style="left:1501px;top:760px;width:1px;height:7px;background:#c4c4c4;"></div>
<div class="a" style="left:1530px;top:760px;width:1px;height:7px;background:#c4c4c4;"></div>
<div class="a" style="left:1559px;top:760px;width:1px;height:7px;background:#c4c4c4;"></div>
<div class="a" style="left:1588px;top:760px;width:1px;height:7px;background:#c4c4c4;"></div>
<div class="a" style="left:1617px;top:760px;width:1px;height:7px;background:#c4c4c4;"></div>
<div class="a" style="left:1646px;top:760px;width:1px;height:7px;background:#c4c4c4;"></div>
<div class="a" style="left:1675px;top:760px;width:1px;height:7px;background:#c4c4c4;"></div>
<div class="a" style="left:1704px;top:760px;width:1px;height:7px;background:#c4c4c4;"></div>
<div class="a" style="left:1733px;top:760px;width:1px;height:7px;background:#c4c4c4;"></div>
<div class="a" style="left:1447px;top:481px;width:23px;height:280px;background:#7aafd0;"></div>
<div class="a" style="left:1476px;top:611.8px;width:23px;height:149.2px;background:#7aafd0;"></div>
<div class="a" style="left:1505px;top:668.1px;width:23px;height:92.9px;background:#7aafd0;"></div>
<div class="a" style="left:1534px;top:690.3px;width:23px;height:70.7px;background:#7aafd0;"></div>
<div class="a" style="left:1563px;top:701.9px;width:23px;height:59.1px;background:#7aafd0;"></div>
<div class="a" style="left:1592px;top:701px;width:23px;height:60px;background:#7aafd0;"></div>
<div class="a" style="left:1621px;top:662.8px;width:23px;height:98.2px;background:#7aafd0;"></div>
<div class="a" style="left:1650px;top:656.9px;width:23px;height:104.1px;background:#7aafd0;"></div>
<div class="a" style="left:1679px;top:565.4px;width:23px;height:195.6px;background:#7aafd0;"></div>
<div class="a" style="left:1708px;top:527.7px;width:23px;height:233.3px;background:#7aafd0;"></div>
<div class="t" style="left:1446.5px;top:766px;font-size:11.5px;line-height:13px;color:#777;transform:translateX(-100%) rotate(-37deg);transform-origin:100% 0">0.00061</div>
<div class="t" style="left:1475.5px;top:766px;font-size:11.5px;line-height:13px;color:#777;transform:translateX(-100%) rotate(-37deg);transform-origin:100% 0">0.10</div>
<div class="t" style="left:1504.5px;top:766px;font-size:11.5px;line-height:13px;color:#777;transform:translateX(-100%) rotate(-37deg);transform-origin:100% 0">0.20</div>
<div class="t" style="left:1533.5px;top:766px;font-size:11.5px;line-height:13px;color:#777;transform:translateX(-100%) rotate(-37deg);transform-origin:100% 0">0.30</div>
<div class="t" style="left:1562.5px;top:766px;font-size:11.5px;line-height:13px;color:#777;transform:translateX(-100%) rotate(-37deg);transform-origin:100% 0">0.40</div>
<div class="t" style="left:1591.5px;top:766px;font-size:11.5px;line-height:13px;color:#777;transform:translateX(-100%) rotate(-37deg);transform-origin:100% 0">0.50</div>
<div class="t" style="left:1620.5px;top:766px;font-size:11.5px;line-height:13px;color:#777;transform:translateX(-100%) rotate(-37deg);transform-origin:100% 0">0.60</div>
<div class="t" style="left:1649.5px;top:766px;font-size:11.5px;line-height:13px;color:#777;transform:translateX(-100%) rotate(-37deg);transform-origin:100% 0">0.70</div>
<div class="t" style="left:1678.5px;top:766px;font-size:11.5px;line-height:13px;color:#777;transform:translateX(-100%) rotate(-37deg);transform-origin:100% 0">0.80</div>
<div class="t" style="left:1707.5px;top:766px;font-size:11.5px;line-height:13px;color:#777;transform:translateX(-100%) rotate(-37deg);transform-origin:100% 0">0.90</div>
<div class="t" style="left:1736.5px;top:766px;font-size:11.5px;line-height:13px;color:#777;transform:translateX(-100%) rotate(-37deg);transform-origin:100% 0">1.0</div>
<div class="t" style="left:1528.3px;top:806.33px;font-size:14px;line-height:15.64px;color:#555;font-weight:400;transform:scaleX(0.9758);transform-origin:0 0;">Scored Probabilities</div>
<div class="t" style="left:1394px;top:620.5px;font-size:14px;line-height:15px;color:#777;transform:translate(-50%,-50%) rotate(-90deg)">frequency</div>
</body></html>
